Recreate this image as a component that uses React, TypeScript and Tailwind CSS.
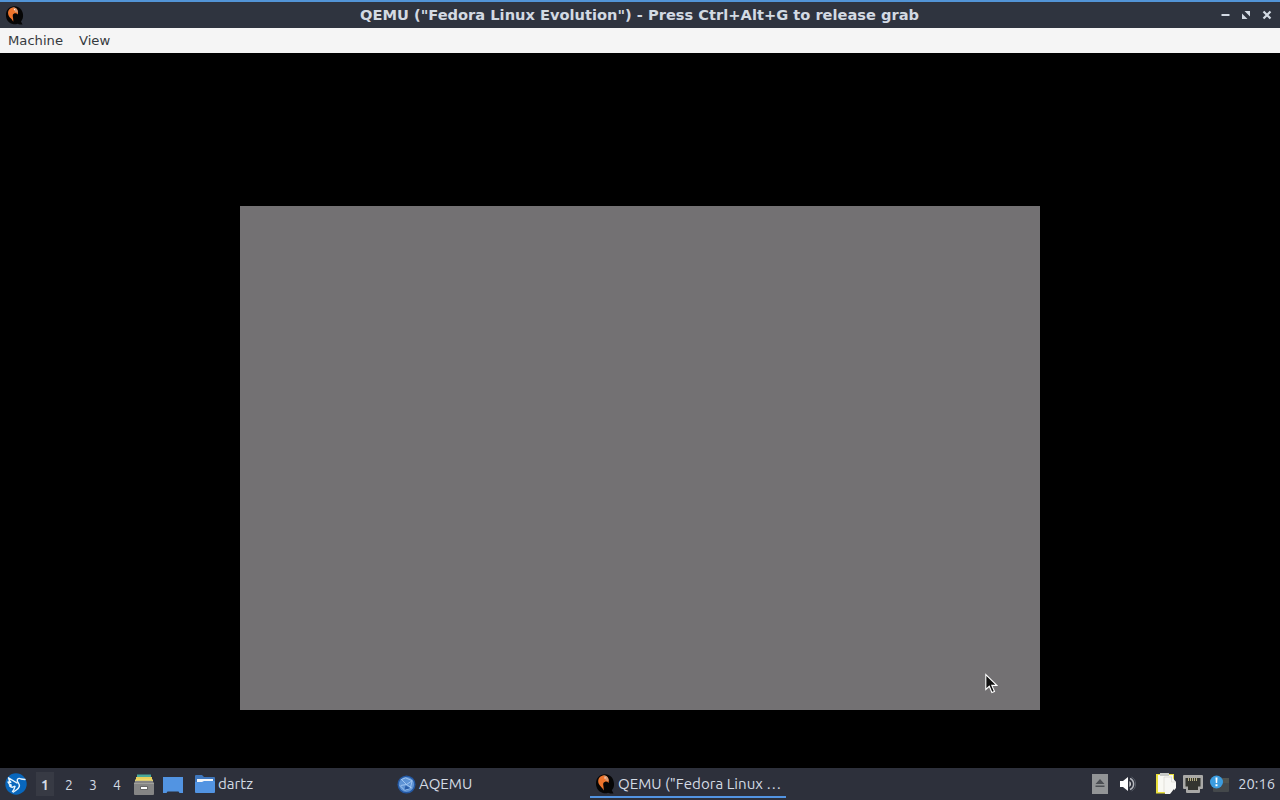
import type { ReactNode } from "react";

const DESKTOPS = ["1", "2", "3", "4"];

function QemuIcon({ className }: { className: string }) {
  return (
    <svg viewBox="0 0 20 20" className={className}>
      <path d="M10 .3C4.500.3 1 4.300 1 9.500s3.300 9 8 9.700c1.500.2 3 0 4-.5l2.500.8h3l-1.700-3.200c1.700-1.900 2.400-4.200 2.200-6.800C18.700 4 15 .3 10 .3z" fill="#060606" />
      <path d="M9 1.500C5.300 1.500 3.200 4.200 3.200 7.300c0 2.400 1.300 4 2.800 5.500 1.200 1.200 2 2.200 2.700 3.800.2-2.300-.3-4.200-.5-5.800-.2-1.700.5-2.700 2-3.100 1.200-.3 2.300.1 3.400 1.300C14.200 4.800 12.700 1.600 9 1.500z" fill="#ee742c" />
      <path d="M9 1.500c3 0 4.800 2.500 4.600 6-.9-.9-2-1.200-3.200-1C11 4.500 10.300 2.800 8 1.600z" fill="#d59b77" />
      <circle cx="10" cy="3.900" r=".7" fill="#fff" />
    </svg>
  );
}

function LubuntuIcon() {
  return (
    <svg viewBox="0 0 22 22" className="h-[22px] w-[22px]">
      <circle cx="11" cy="11" r="10.700" fill="#0867bd" />
      <g fill="none" stroke="#e9f6ff" strokeWidth="1.400" strokeLinecap="round" strokeLinejoin="round">
        <path d="M20 6.500l-4-.5c-2-1.400-4.200-.2-3.700 2 .4 1.900 2.700 3 2 5.500-.7 2.700-3.300 3.500-5.800 5.500" />
        <path d="M12 10L3.500 4.800c.2 2 1 3.400 2.300 4.400L3 9c.6 1.600 1.700 2.700 3.300 3.200l-1.800.6c1.400 1.500 3.500 1.600 5 .5" />
        <path d="M10 13.500c-1 2-.5 3.200-2.500 5" />
      </g>
    </svg>
  );
}

function CabinetIcon() {
  return (
    <svg viewBox="0 0 20 21" className="h-[21px] w-5">
      <path d="M3 .5h14v4H3z" fill="#48a99a" />
      <path d="M2 3h16v4H2z" fill="#e9cf5a" />
      <path d="M1 5.500h18v3H1z" fill="#f3df72" />
      <path d="M0 9l1.500-2.200h17L20 9v11a1 1 0 01-1 1H1a1 1 0 01-1-1z" fill="#858585" />
      <path d="M0 9h20v1H0z" fill="#a0a09c" />
      <rect x="6" y="12" width="8" height="4" rx="1" fill="#686868" />
      <path d="M7 13h6v2H7z" fill="#fff" />
    </svg>
  );
}

function FolderIcon() {
  return (
    <svg viewBox="0 0 20 18" className="h-[18px] w-5">
      <path d="M1 0h6l2 2h10a1 1 0 011 1v5H0V1a1 1 0 011-1z" fill="#3f77bd" />
      <path d="M2 4h16v3H2z" fill="#f2f6fa" />
      <path d="M0 7h7l2-1h10a1 1 0 011 1v10a1 1 0 01-1 1H1a1 1 0 01-1-1z" fill="#5294e2" />
    </svg>
  );
}

function AqemuIcon() {
  return (
    <svg viewBox="0 0 20 20" className="h-[19px] w-[19px]">
      <circle cx="10" cy="10" r="9.500" fill="#2458a3" />
      <circle cx="10" cy="10" r="8" fill="#5e93d5" />
      <path d="M4 5l5-2 7 3-2 8-6 2-5-5M5 5l5 5 6 4M16 6l-6 4-6 1" fill="none" stroke="#a8cbf4" strokeWidth=".9" />
      <path d="M9 11l5 3-6 1.500z" fill="#285ca8" />
    </svg>
  );
}

function Task({ icon, label, active }: { icon: ReactNode; label: string; active?: boolean }) {
  return (
    <div className={`flex h-[30px] w-[196px] items-center gap-[3px] border-b-2 pt-1 pl-[5px] ${active ? "border-[#5294e2]" : "border-transparent"}`}>
      {icon}
      <span className="whitespace-nowrap">{label}</span>
    </div>
  );
}

function TitleBar() {
  return (
    <div className="flex h-7 items-center border-t-2 border-[#5294d6] bg-[#2f343f] pl-[5px]">
      <QemuIcon className="h-[19px] w-[19px]" />
      <div className="flex-1 scale-x-[1.1] pt-px pl-[141px] text-center text-[13.3px] font-bold whitespace-nowrap text-[#d3dae3]" style={{ fontFamily: '"DejaVu Sans", sans-serif' }}>
        QEMU ("Fedora Linux Evolution") - Press Ctrl+Alt+G to release grab
      </div>
      <div className="flex w-[180px] items-center justify-end gap-[11px] pr-2">
        <svg viewBox="0 0 9 10" className="h-[10px] w-[9px]"><path d="M.5 4h8v2h-8z" fill="#d3dae3" /></svg>
        <svg viewBox="0 0 10 10" className="h-[10px] w-[10px]"><path d="M3.500 1H9v5.500zM1 3.500V9h5.500z" fill="#d3dae3" /></svg>
        <svg viewBox="0 0 10 10" className="h-[10px] w-[10px]"><path d="M1.500 1.500l7 7M8.500 1.500l-7 7" stroke="#d3dae3" strokeWidth="2.200" /></svg>
      </div>
    </div>
  );
}

function Tray() {
  return (
    <div className="ml-auto flex items-center pr-[5px]">
      <svg viewBox="0 0 16 20" className="mr-3 h-5 w-4">
        <path d="M0 0h16v20H0z" fill="#929496" />
        <path d="M8 5l4.500 5h-9zM3.500 11.500h9V13h-9z" fill="#4b4e53" />
      </svg>
      <svg viewBox="0 0 16 16" className="mr-5 h-4 w-4">
        <path d="M0 5h3l5-4v14l-5-4H0z" fill="#fff" />
        <path d="M9.500 5a4 4 0 010 6z" fill="#fff" />
        <path d="M10 2.500a6 6 0 010 11" fill="none" stroke="#b7bac0" strokeWidth="1.500" />
        <path d="M11.500 1a8 8 0 010 14" fill="none" stroke="#555a65" strokeWidth="1" />
      </svg>
      <svg viewBox="0 0 20 21" className="mr-[7px] h-[21px] w-5">
        <path d="M0 1h18v19.500H0z" fill="#e9df3b" />
        <path d="M2 2h15v17H2z" fill="#f9f9f4" />
        <path d="M4 0h9v3H4z" fill="#c9cbc8" />
        <path d="M8 4h8l4 5v6l-5 6H9z" fill="#f7f7f4" />
        <path d="M8 19V4h8M15.500 4v5H20" fill="none" stroke="#d3d2c9" strokeWidth=".6" />
        <path d="M18 16v5h-4z" fill="#2d303b" />
      </svg>
      <svg viewBox="0 0 20 18" className="mr-[7px] h-[18px] w-5">
        <path d="M1 0h18a1 1 0 011 1v12a1 1 0 01-1 1h-2v3a1 1 0 01-1 1H4a1 1 0 01-1-1v-3H1a1 1 0 01-1-1V1a1 1 0 011-1z" fill="#a9a8a6" />
        <path d="M2.500 3h15v8.500H15V15H5v-3.500H2.500z" fill="#33342f" />
        <path d="M5.500 3v3M7.500 3v3M9.500 3v3M11.500 3v3M13.500 3v3" stroke="#b6ae83" />
      </svg>
      <svg viewBox="0 0 20 18" className="mr-2 h-[18px] w-5">
        <path d="M3 3h16v13a1 1 0 01-1 1H4a1 1 0 01-1-1z" fill="#44484b" />
        <path d="M12 3h7v5h-7z" fill="#50534f" />
        <circle cx="6.500" cy="7" r="6.500" fill="#3b9ce0" />
        <path d="M5.500 2.500h2l-.3 5.500H5.800zM5.500 9.300h2v2h-2z" fill="#fff" />
      </svg>
      <span className="text-[14.7px] whitespace-nowrap">20:16</span>
    </div>
  );
}

export default function App() {
  return (
    <div className="flex h-[800px] w-[1280px] flex-col overflow-hidden bg-black">
      <TitleBar />

      {/* Menu */}
      <div className="flex h-[25px] items-center gap-4 bg-[#f5f5f5] pt-px pl-2 text-[13.15px] text-[#363a40]" style={{ fontFamily: '"DejaVu Sans", sans-serif' }}>
        <span>Machine</span>
        <span>View</span>
      </div>

      {/* Guest display */}
      <div className="flex-1 bg-black pt-[153px] pl-[240px]">
        <div className="relative h-[504px] w-[800px] bg-[#737173]">
          <svg viewBox="0 0 13 21" className="absolute top-[467px] left-[745px] h-[21px] w-[13px]">
            <path d="M.8 1.500v15l3.500-3.200 2.600 6.200 2.600-1.100-2.700-6h5z" fill="#111" stroke="#fff" strokeWidth="1.100" />
          </svg>
        </div>
      </div>

      {/* Panel */}
      <div className="flex h-8 items-center bg-[#2d303b] text-[15.1px] text-[#d3dae3]" style={{ fontFamily: 'Ubuntu, "Noto Sans", sans-serif' }}>
        <div className="w-[33px] pl-[5px]">
          <LubuntuIcon />
        </div>
        {DESKTOPS.map((d, i) => (
          <div key={d} className="flex w-6 justify-center">
            <span className={`flex h-6 w-[18px] items-center justify-center pt-0.5 text-[14px] ${i === 0 ? "bg-[#373a44] font-bold" : ""}`}>{d}</span>
          </div>
        ))}
        <div className="flex w-[61px] items-center gap-[9px] pl-[5px]">
          <CabinetIcon />
          <svg viewBox="0 0 20 16" className="mt-0.5 h-4 w-5">
            <path d="M0 0h20v16h-3.500l-1-1.500h-11L3.500 16H0z" fill="#5294e2" />
          </svg>
        </div>
        <div className="flex -translate-y-px gap-[2px]">
          <div className="w-[200px]">
            <Task icon={<FolderIcon />} label="dartz" />
          </div>
          <Task icon={<AqemuIcon />} label="AQEMU" />
          <Task icon={<QemuIcon className="h-5 w-5" />} label={'QEMU ("Fedora Linux …'} active />
        </div>
        <Tray />
      </div>
    </div>
  );
}
